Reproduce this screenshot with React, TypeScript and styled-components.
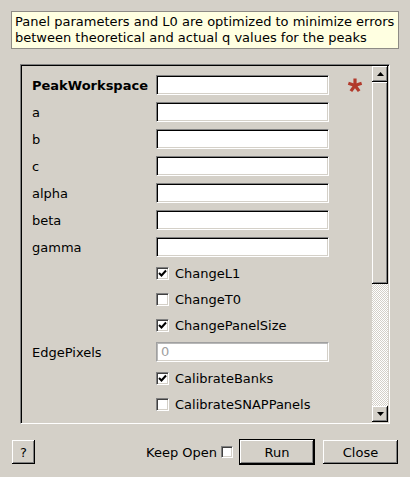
import React from "react";
import styled, { createGlobalStyle } from "styled-components";

const GlobalStyle = createGlobalStyle`
  html, body { margin: 0; padding: 0; }
  body {
    background: #d4d0c8;
    font-family: "DejaVu Sans", "Liberation Sans", sans-serif;
    font-size: 13px;
    color: #000;
  }
  * { box-sizing: border-box; }
`;

const Page = styled.div`
  width: 410px;
  height: 477px;
  padding: 11px 12px 0 11px;
  display: flex;
  flex-direction: column;
`;

const InfoBox = styled.div`
  width: 388px;
  height: 38px;
  border: 1px solid #8e8b85;
  background: #ffffe1;
  padding: 2px 3px 0 3px;
  line-height: 16px;
  white-space: nowrap;
`;

const Frame = styled.div`
  margin: 15px 0 0 9px;
  width: 370px;
  height: 360px;
  display: flex;
  border: 1px solid;
  border-color: #808080 #ffffff #ffffff #808080;
  box-shadow: inset 1px 1px #000, inset -1px -1px #d4d0c8;
  padding: 1px;
`;

const Content = styled.div`
  flex: 1;
  padding: 9px 0 0 10px;
  display: flex;
  flex-direction: column;
  gap: 7px;
  overflow: hidden;
`;

const Row = styled.div`
  display: grid;
  grid-template-columns: 124px 173px auto;
  align-items: center;
  height: 20px;
`;

const Label = styled.span<{ $bold?: boolean }>`
  font-weight: ${(p) => (p.$bold ? "bold" : "normal")};
  white-space: nowrap;
`;

const TextInput = styled.div<{ $placeholder?: boolean }>`
  width: 173px;
  height: 20px;
  background: #fff;
  border: 1px solid;
  border-color: ${(p) => (p.$placeholder ? "#a0a0a0" : "#808080")} #ffffff #ffffff
    ${(p) => (p.$placeholder ? "#a0a0a0" : "#808080")};
  box-shadow: ${(p) =>
    p.$placeholder
      ? "inset 1px 1px #b8b8b8, inset -1px -1px #d4d0c8"
      : "inset 1px 1px #000, inset -1px -1px #d4d0c8"};
  padding: 0 4px;
  line-height: 18px;
  color: #a0a0a0;
`;

const Required = styled.svg`
  margin-left: 18px;
  width: 16px;
  height: 16px;
`;

const CheckRow = styled.label`
  height: 19px;
  padding-left: 124px;
  display: flex;
  align-items: center;
  gap: 6px;
  white-space: nowrap;
`;

const Box = styled.span`
  width: 13px;
  height: 13px;
  flex: none;
  background: #fff;
  border: 1px solid;
  border-color: #808080 #ffffff #ffffff #808080;
  box-shadow: inset 1px 1px #404040, inset -1px -1px #d4d0c8;
  display: flex;
  align-items: center;
  justify-content: center;
`;

const ScrollBar = styled.div`
  width: 16px;
  display: flex;
  flex-direction: column;
`;

const raised = `
  background: #d4d0c8;
  box-shadow: inset -1px -1px #000, inset 1px 1px #fff, inset -2px -2px #808080;
`;

const ArrowButton = styled.div`
  height: 16px;
  flex: none;
  ${raised}
  display: flex;
  align-items: center;
  justify-content: center;
`;

const Handle = styled.div`
  height: 202px;
  flex: none;
  ${raised}
`;

const Track = styled.div`
  flex: 1;
  background-image: conic-gradient(#ffffff 25%, #d4d0c8 0 50%, #ffffff 0 75%, #d4d0c8 0);
  background-size: 2px 2px;
`;

const Bottom = styled.div`
  margin-top: 15px;
  display: flex;
  align-items: center;
  height: 26px;
`;

const Button = styled.button<{ $w: number; $default?: boolean; $gap?: number }>`
  width: ${(p) => p.$w}px;
  height: ${(p) => (p.$default ? 26 : 24)}px;
  margin-left: ${(p) => p.$gap ?? 0}px;
  padding: 0;
  font-family: inherit;
  font-size: 13px;
  color: #000;
  background: #d4d0c8;
  border: ${(p) => (p.$default ? "1px solid #000" : "none")};
  box-shadow: inset -1px -1px #000, inset 1px 1px #fff, inset -2px -2px #808080;
  cursor: default;
`;

const Spacer = styled.div`
  flex: 1;
`;

const KeepOpen = styled.label`
  display: flex;
  align-items: center;
  gap: 4px;
  margin-right: 6px;
`;

const SmallBox = styled(Box)`
  width: 12px;
  height: 12px;
`;

const Check = () => (
  <svg width="9" height="9" viewBox="0 0 9 9">
    <polyline points="1,4 3.5,6.5 8,1.5" fill="none" stroke="#000" strokeWidth="2" />
  </svg>
);

const Asterisk = () => (
  <Required viewBox="0 0 16 16">
    {[-90, -18, 54, 126, 198].map((a) => {
      const r = (a * Math.PI) / 180;
      return (
        <line
          key={a}
          x1="8"
          y1="8.5"
          x2={8 + 7 * Math.cos(r)}
          y2={8.5 + 7 * Math.sin(r)}
          stroke="#b23a2c"
          strokeWidth="3.2"
          strokeLinecap="butt"
        />
      );
    })}
  </Required>
);

const fields = ["a", "b", "c", "alpha", "beta", "gamma"];

const CheckItem = ({ label, checked }: { label: string; checked?: boolean }) => (
  <CheckRow>
    <Box>{checked && <Check />}</Box>
    {label}
  </CheckRow>
);

export default function App() {
  return (
    <>
      <GlobalStyle />
      <Page>
        <InfoBox>
          Panel parameters and L0 are optimized to minimize errors
          <br />
          between theoretical and actual q values for the peaks
        </InfoBox>
        <Frame>
          <Content>
            <Row>
              <Label $bold>PeakWorkspace</Label>
              <TextInput />
              <Asterisk />
            </Row>
            {fields.map((f) => (
              <Row key={f}>
                <Label>{f}</Label>
                <TextInput />
              </Row>
            ))}
            <CheckItem label="ChangeL1" checked />
            <CheckItem label="ChangeT0" />
            <CheckItem label="ChangePanelSize" checked />
            <Row>
              <Label>EdgePixels</Label>
              <TextInput $placeholder>0</TextInput>
            </Row>
            <CheckItem label="CalibrateBanks" checked />
            <CheckItem label="CalibrateSNAPPanels" />
          </Content>
          <ScrollBar>
            <ArrowButton>
              <svg width="7" height="4" viewBox="0 0 7 4">
                <polygon points="3.5,0 7,4 0,4" fill="#000" />
              </svg>
            </ArrowButton>
            <Handle />
            <Track />
            <ArrowButton>
              <svg width="7" height="4" viewBox="0 0 7 4">
                <polygon points="0,0 7,0 3.5,4" fill="#000" />
              </svg>
            </ArrowButton>
          </ScrollBar>
        </Frame>
        <Bottom>
          <Button $w={23} $gap={1}>?</Button>
          <Spacer />
          <KeepOpen>
            Keep Open
            <SmallBox />
          </KeepOpen>
          <Button $w={76} $default>
            Run
          </Button>
          <Button $w={75} $gap={8}>
            Close
          </Button>
        </Bottom>
      </Page>
    </>
  );
}
